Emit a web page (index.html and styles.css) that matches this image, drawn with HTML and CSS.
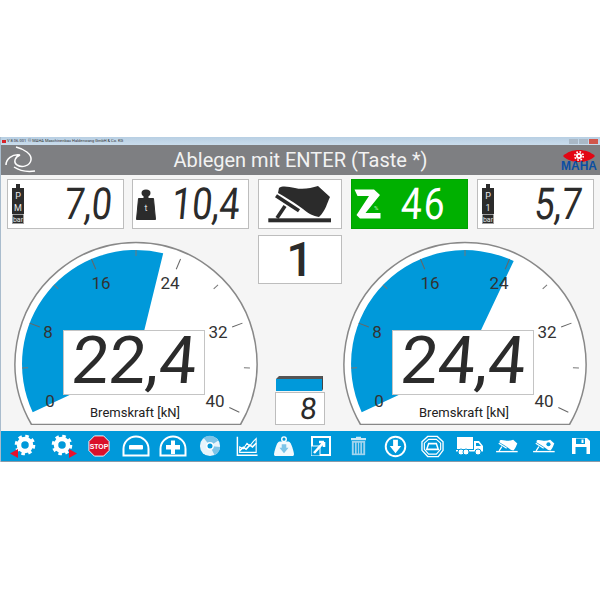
FILE: index.html
```html
<!DOCTYPE html>
<html lang="de">
<head>
<meta charset="utf-8">
<title>MAHA</title>
<link rel="stylesheet" href="styles.css">
</head>
<body>
<div class="app">
  <div class="titlebar">
    <span class="tb-flag"></span>
    <span class="tb-text">V 8.06.001 &nbsp;© MAHA Maschinenbau Haldenwang GmbH &amp; Co. KG</span>
    <span class="tb-btns"><i></i><i></i><i class="close"></i></span>
  </div>
  <header class="header">
    <svg class="swirl" viewBox="0 0 32 28" width="32" height="28">
      <path d="M11 1 C19 3 27 8 26 14 C25 20 17 22 12 19 C8 16 10 11 15 9 C7 8 1 13 1 19 M9 21 C15 25 23 26 30 25" fill="none" stroke="#fff" stroke-width="1.500"/>
    </svg>
    <h1 class="title">Ablegen mit ENTER (Taste *)</h1>
    <div class="maha">
      <svg class="eye" viewBox="0 0 32 12" width="32" height="12">
        <path d="M0 6 C8 -2 24 -2 32 6 C24 14 8 14 0 6Z" fill="#e30613"/>
        <circle cx="16" cy="6" r="3" fill="#fff"/>
        <circle cx="16" cy="6" r="4.200" fill="none" stroke="#fff" stroke-width="1.600" stroke-dasharray="1.650 1.650"/>
        <circle cx="16" cy="6" r="1.100" fill="#e30613"/>
      </svg>
      <span class="maha-text">MAHA</span>
    </div>
  </header>

  <main class="content">
    <section class="top-row">
      <div class="box lcd-box">
        <svg class="bottle" viewBox="0 0 14 40" width="14" height="40">
          <path d="M5 0H9V4H13V40H1V4H5Z" fill="#2b2b2b"/>
          <text class="bottle-t" x="7" y="15">P</text>
          <text class="bottle-t" x="7" y="27">M</text>
          <rect x="1.300" y="30.500" width="11.400" height="9" fill="#2b2b2b" stroke="#eee" stroke-width=".6"/>
          <text class="bottle-u" x="7" y="37.800">bar</text>
        </svg>
        <span class="lcd lcd-m">7,0</span>
      </div>
      <div class="box lcd-box tight">
        <svg class="weight" viewBox="0 0 20 31" width="20" height="31">
          <ellipse cx="10" cy="4" rx="4.500" ry="3.500" fill="#2b2b2b"/>
          <rect x="7.500" y="6" width="5" height="4" fill="#2b2b2b"/>
          <path d="M2.500 9.500H17.500L19.500 30.500H0.500Z" fill="#2b2b2b" stroke="#2b2b2b" stroke-linejoin="round"/>
          <text class="weight-t" x="10" y="22">t</text>
        </svg>
        <span class="lcd lcd-m">10,4</span>
      </div>
      <div class="box pedal-box">
        <svg viewBox="0 0 82 48" width="82" height="48">
          <path d="M20 8 C24 5 30 7 36 8 C44 10 52 8 59 6 L71 17 C68 23 67 30 60 37 C54 36 50 34 44 29 C36 23 26 17 19 13 Z" fill="#2b2b2b"/>
          <path d="M17 15.700 L40 30.700" stroke="#2b2b2b" stroke-width="3.600"/>
          <path d="M26 26 L18 38" stroke="#2b2b2b" stroke-width="3.600" fill="none"/>
          <rect x="9.300" y="38.300" width="62.700" height="4" fill="#2b2b2b"/>
        </svg>
      </div>
      <div class="box zone-box">
        <svg class="z" viewBox="0 0 27 30" width="27" height="30">
          <path d="M0.500 0.500 H20 L26 6 L11.500 24 H26.500 V29.500 H6 L2.500 26 L15 7 H3.500 Z" fill="#fff"/>
        </svg>
        <span class="pct">%</span>
        <span class="lcd lcd-z">46</span>
      </div>
      <div class="box lcd-box">
        <svg class="bottle" viewBox="0 0 14 40" width="14" height="40">
          <path d="M5 0H9V4H13V40H1V4H5Z" fill="#2b2b2b"/>
          <text class="bottle-t" x="7" y="15">P</text>
          <text class="bottle-t" x="7" y="27">1</text>
          <rect x="1.300" y="30.500" width="11.400" height="9" fill="#2b2b2b" stroke="#eee" stroke-width=".6"/>
          <text class="bottle-u" x="7" y="37.800">bar</text>
        </svg>
        <span class="lcd lcd-m">5,7</span>
      </div>
    </section>

    <section class="gauges">
      <div class="gauge">
        <svg viewBox="0 0 246 190" width="246" height="190">
          <path class="dial" d="M18.500 189.500 A121 121 0 1 1 227.500 189.500 Z"/>
          <path class="sector" d="M19.700 177.200 A114 114 0 0 1 150.200 18.300 L123 129 Z"/>
          <g class="ticks">
            <line class="maj" x1="9" y1="129" x2="20" y2="129" transform="rotate(21 123 129)"/>
            <line x1="9" y1="129" x2="15" y2="129" transform="rotate(-2 123 129)"/>
            <line x1="9" y1="129" x2="15" y2="129" transform="rotate(44 123 129)"/>
            <line class="maj" x1="9" y1="129" x2="20" y2="129" transform="rotate(67 123 129)"/>
            <line x1="9" y1="129" x2="15" y2="129" transform="rotate(90 123 129)"/>
            <line class="maj" x1="9" y1="129" x2="20" y2="129" transform="rotate(113 123 129)"/>
            <line x1="9" y1="129" x2="15" y2="129" transform="rotate(136 123 129)"/>
            <line class="maj" x1="9" y1="129" x2="20" y2="129" transform="rotate(159 123 129)"/>
            <line x1="9" y1="129" x2="15" y2="129" transform="rotate(182 123 129)"/>
            <line class="maj" x1="9" y1="129" x2="20" y2="129" transform="rotate(205 123 129)"/>
          </g>
          <g class="scale">
            <text x="37" y="172">0</text>
            <text x="35" y="103">8</text>
            <text x="88" y="54">16</text>
            <text x="157" y="54">24</text>
            <text x="205" y="103">32</text>
            <text x="202" y="172">40</text>
          </g>
          <text class="unit" x="122" y="182">Bremskraft [kN]</text>
        </svg>
        <div class="box readout"><span class="lcd lcd-l">22,4</span></div>
      </div>

      <div class="center">
        <div class="box count">1</div>
        <div class="side">
          <svg class="bar" viewBox="0 0 48 15" width="48" height="15">
            <path d="M3 0H47V3H0Z" fill="#555"/>
            <path d="M47 0V13L46 15V3Z" fill="#444"/>
            <rect x="0" y="3" width="46" height="12" fill="#0099da"/>
          </svg>
          <div class="box small"><span class="lcd lcd-s">8</span></div>
        </div>
      </div>

      <div class="gauge">
        <svg viewBox="0 0 246 190" width="246" height="190">
          <path class="dial" d="M18.500 189.500 A121 121 0 1 1 227.500 189.500 Z"/>
          <path class="sector" d="M19.700 177.200 A114 114 0 0 1 171.700 26 L123 129 Z"/>
          <g class="ticks">
            <line class="maj" x1="9" y1="129" x2="20" y2="129" transform="rotate(21 123 129)"/>
            <line x1="9" y1="129" x2="15" y2="129" transform="rotate(-2 123 129)"/>
            <line x1="9" y1="129" x2="15" y2="129" transform="rotate(44 123 129)"/>
            <line class="maj" x1="9" y1="129" x2="20" y2="129" transform="rotate(67 123 129)"/>
            <line x1="9" y1="129" x2="15" y2="129" transform="rotate(90 123 129)"/>
            <line class="maj" x1="9" y1="129" x2="20" y2="129" transform="rotate(113 123 129)"/>
            <line x1="9" y1="129" x2="15" y2="129" transform="rotate(136 123 129)"/>
            <line class="maj" x1="9" y1="129" x2="20" y2="129" transform="rotate(159 123 129)"/>
            <line x1="9" y1="129" x2="15" y2="129" transform="rotate(182 123 129)"/>
            <line class="maj" x1="9" y1="129" x2="20" y2="129" transform="rotate(205 123 129)"/>
          </g>
          <g class="scale">
            <text x="37" y="172">0</text>
            <text x="35" y="103">8</text>
            <text x="88" y="54">16</text>
            <text x="157" y="54">24</text>
            <text x="205" y="103">32</text>
            <text x="202" y="172">40</text>
          </g>
          <text class="unit" x="122" y="182">Bremskraft [kN]</text>
        </svg>
        <div class="box readout"><span class="lcd lcd-l">24,4</span></div>
      </div>
    </section>
  </main>

  <nav class="toolbar">
    <svg class="ico" viewBox="0 0 30 26" width="30" height="26"><g transform="translate(15 12)"><circle r="6" fill="none" stroke="#fff" stroke-width="4.500"/><circle r="8.800" fill="none" stroke="#fff" stroke-width="3" stroke-dasharray="3.500 3.410"/></g><path d="M0 20.500L8 16V25Z" fill="#e8112d"/></svg>
    <svg class="ico" viewBox="0 0 30 26" width="30" height="26"><g transform="translate(15 12)"><circle r="6" fill="none" stroke="#fff" stroke-width="4.500"/><circle r="8.800" fill="none" stroke="#fff" stroke-width="3" stroke-dasharray="3.500 3.410"/></g><path d="M30 20.500L22 16V25Z" fill="#e8112d"/></svg>
    <svg class="ico" viewBox="0 0 24 24" width="22" height="22"><path d="M7 1H17L23 7V17L17 23H7L1 17V7Z" fill="#d9112a" stroke="#fff"/><text class="stop" x="12" y="15">STOP</text></svg>
    <svg class="ico" viewBox="0 0 28 24" width="28" height="24"><path d="M1.500 21.500 V15 A12.500 12.500 0 0 1 26.500 15 V21.500 Z" fill="none" stroke="#fff" stroke-width="2"/><rect x="7" y="11" width="14" height="4.500" rx="1" fill="#fff"/></svg>
    <svg class="ico" viewBox="0 0 28 24" width="28" height="24"><path d="M1.500 21.500 V15 A12.500 12.500 0 0 1 26.500 15 V21.500 Z" fill="none" stroke="#fff" stroke-width="2"/><path d="M7 11H12V6.500H16V11H21V15.500H16V20H12V15.500H7Z" fill="#fff"/></svg>
    <svg class="ico" viewBox="0 0 24 24" width="22" height="22"><circle cx="12" cy="12" r="11" fill="#e8f4fb"/><path d="M12 12 L5 3 A11 11 0 0 1 21 6Z M12 12 L23 13 A11 11 0 0 1 17 22Z" fill="#7cc4e8"/><circle cx="12" cy="12" r="3.500" fill="#0099da" stroke="#fff" stroke-width="1.500"/></svg>
    <svg class="ico" viewBox="0 0 24 24" width="22" height="22"><path d="M1.500 2V22H23.500" fill="none" stroke="#fff" stroke-width="1.600"/><path d="M4 19V13L8 15L12 9L15 12L19 7L22 4V19Z" fill="none" stroke="#fff" stroke-width="1.200"/><path d="M4 17L8 13.500L11 15.500L15 11L18 13L22 9" fill="none" stroke="#fff" stroke-width="1.800"/></svg>
    <svg class="ico" viewBox="0 0 24 22" width="22" height="20"><circle cx="12" cy="3.500" r="2.500" fill="none" stroke="#fff" stroke-width="1.500"/><path d="M7 6H17C20 6 23 18 23 20C23 21.500 22 22 21 22H3C2 22 1 21.500 1 20C1 18 4 6 7 6Z" fill="#f2f9fd"/><path d="M9.500 9H14.500V13H17L12 19L7 13H9.500Z" fill="#7cc4e8"/></svg>
    <svg class="ico" viewBox="0 0 20 20" width="20" height="20"><path d="M1 1H19V19H1Z" fill="none" stroke="#fff" stroke-width="2"/><rect x="0" y="10" width="9" height="10" fill="#0099da" stroke="#fff"/><path d="M3 17L13 6M13 6H8M13 6V11" fill="none" stroke="#fff" stroke-width="2.600"/></svg>
    <svg class="ico" viewBox="0 0 20 24" width="17" height="20"><path d="M7 2.500V1H13V2.500H19V5H1V2.500Z" fill="#cfe9f6"/><path d="M2 6H18V23H2Z" fill="#9fd4ee"/><path d="M5 8V21M8.500 8V21M11.500 8V21M15 8V21" stroke="#0099da" stroke-width="1.400"/></svg>
    <svg class="ico" viewBox="0 0 24 24" width="23" height="23"><circle cx="12" cy="12" r="10.200" fill="none" stroke="#fff" stroke-width="2"/><path d="M9.500 5H14.500V11.500H18L12 19L6 11.500H9.500Z" fill="#fff"/></svg>
    <svg class="ico" viewBox="0 0 24 24" width="23" height="23"><g fill="none" stroke="#fff"><path d="M7 1.500L17 1.500L23 7V16L18 22.500H7L1 16V7Z" stroke-width="1.400"/><path d="M8 4.500L16 4.500L20.500 8.500V15L16 20H8L3.500 15V8.500Z" stroke-width="1.200"/><path d="M8 9H16L18 15H6Z" stroke-width="1.600"/></g></svg>
    <svg class="ico" viewBox="0 0 28 20" width="28" height="20"><path d="M1 1H17V13H1Z M18 5H23L27 10V15H18Z" fill="#fff"/><rect x="0" y="14" width="27" height="1.500" fill="#fff"/><g fill="#fff" stroke="#0099da"><circle cx="5" cy="16" r="3"/><circle cx="10" cy="16" r="3"/><circle cx="22" cy="16" r="3"/></g><path d="M20 7H22.500L25 10H20Z" fill="#0099da"/></svg>
    <svg class="ico" viewBox="9 4 64 40" width="22" height="14"><path d="M20 8 C24 5 30 7 36 8 C44 10 52 8 59 6 L71 17 C68 23 67 30 60 37 C54 36 50 34 44 29 C36 23 26 17 19 13 Z" fill="#fff"/><path d="M17 15.700 L40 30.700 M26 26 L18 38" stroke="#fff" stroke-width="3.600" fill="none"/><rect x="9.300" y="38.300" width="62.700" height="4" fill="#fff"/></svg>
    <svg class="ico" viewBox="9 4 64 40" width="22" height="14"><path d="M20 8 C24 5 30 7 36 8 C44 10 52 8 59 6 L71 17 C68 23 67 30 60 37 C54 36 50 34 44 29 C36 23 26 17 19 13 Z" fill="#fff"/><circle cx="54" cy="19" r="6" fill="#0099da"/><path d="M17 15.700 L40 30.700 M26 26 L18 38" stroke="#fff" stroke-width="3.600" fill="none"/><rect x="9.300" y="38.300" width="62.700" height="4" fill="#fff"/></svg>
    <svg class="ico" viewBox="0 0 20 20" width="20" height="20"><path d="M1 2H16L19 5V18H1Z" fill="#fff"/><rect x="5" y="2.500" width="9" height="5.500" fill="#0099da"/><rect x="10.500" y="3.500" width="2" height="3.500" fill="#fff"/><rect x="4.500" y="11" width="11" height="7" fill="#0099da"/></svg>
  </nav>
</div>
</body>
</html>
```
FILE: styles.css
```css
* { box-sizing: border-box; }
html, body { margin: 0; padding: 0; background: #fff; }
body { width: 600px; height: 600px; padding-top: 137px; font-family: Roboto, "Liberation Sans", sans-serif; }
.app { width: 600px; height: 325px; display: flex; flex-direction: column; background: #f5f5f5; border-left: 1px solid #a9bccd; }
.titlebar { height: 8px; flex: none; display: flex; align-items: center; gap: 1px; padding: 0 2px 0 1px; background: linear-gradient(#b8cfe3, #c9dcec); }
.tb-flag { width: 4px; height: 3px; background: #d8232a; }
.tb-text { font-size: 4px; line-height: 8px; color: #333; white-space: nowrap; }
.tb-btns { margin-left: auto; display: flex; gap: 1px; }
.tb-btns i { display: block; width: 9px; height: 5px; background: #a9b8c6; }
.tb-btns i.close { background: #d0574c; }
.header { height: 30px; flex: none; display: flex; align-items: center; justify-content: center; position: relative; background: #7e7f82; }
.swirl { position: absolute; left: 4px; top: 1px; }
.title { margin: 0; font-weight: 400; font-size: 20px; line-height: 30px; color: #f2f2f2; }
.maha { position: absolute; right: 4px; top: 5px; width: 34px; display: flex; flex-direction: column; align-items: center; }
.eye { display: block; }
.maha-text { font-family: "Liberation Sans", sans-serif; font-weight: 700; font-size: 12px; line-height: 11px; color: #0a4ea2; margin-top: -1px; }
.content { flex: 1; display: flex; flex-direction: column; }
.box { background: #fff; border: 1px solid #bdbdbd; }
.top-row { display: flex; gap: 9px; padding: 4px 5px 0 6px; height: 54px; flex: none; }
.top-row .box { height: 50px; width: 117px; flex: none; display: flex; align-items: center; position: relative; }
.lcd-box { padding: 0 11px 0 3px; }
.top-row .tight { margin-left: -1px; padding-right: 8px; }
.top-row .pedal-box { width: 84px; justify-content: center; }
.top-row .zone-box { background: #00b000; border-color: #00a000; padding: 0 21px 0 2px; }
.pct { position: absolute; left: 22px; top: 24px; font-size: 6px; font-weight: 700; color: #9be39b; }
.bottle-t { font-size: 9px; fill: #e8e8e8; text-anchor: middle; }
.bottle-u { font-size: 7px; fill: #e8e8e8; text-anchor: middle; }
.weight-t { font-size: 9px; fill: #ddd; text-anchor: middle; }
.lcd { font-family: Roboto, "Liberation Sans", sans-serif; color: #2b2b2b; display: inline-block; transform-origin: right center; }
.lcd-m { font-size: 44px; line-height: 48px; margin-left: auto; letter-spacing: 0; transform: skewX(-5deg) scaleX(.82); }
.lcd-z { font-size: 44px; line-height: 48px; color: #fff; margin-left: auto; letter-spacing: 2px; transform: skewX(-3deg) scaleX(.85); }
.gauges { flex: 1; display: flex; padding: 6px 0 0 12px; }
.gauge { position: relative; width: 245px; flex: none; height: 190px; }
.gauge + .center + .gauge { width: 246px; }
.gauge svg { display: block; }
.dial { fill: #fff; stroke: #888; stroke-width: 1.500; }
.sector { fill: #0099da; }
.ticks line { stroke: #777; stroke-width: 1; }
.ticks line.maj { stroke: #666; }
.scale text { font-size: 17px; fill: #333; text-anchor: middle; }
.unit { font-size: 13px; fill: #222; text-anchor: middle; }
.readout { position: absolute; left: 50px; top: 95px; width: 142px; height: 65px; border: 1.500px solid #c4c4c4; display: flex; align-items: center; justify-content: center; }
.lcd-l { font-size: 66px; line-height: 62px; letter-spacing: 0; transform: skewX(-5deg); transform-origin: center; padding-bottom: 3px; }
.center { width: 84px; flex: none; height: 190px; display: flex; flex-direction: column; justify-content: space-between; align-items: center; }
.count { width: 84px; height: 49px; font-size: 48px; font-weight: 500; line-height: 47px; text-align: center; color: #2b2b2b; }
.side { display: flex; flex-direction: column; align-items: center; gap: 1px; }
.bar { display: block; }
.small { width: 50px; height: 33px; display: flex; align-items: center; justify-content: flex-end; padding-right: 7px; }
.lcd-s { font-size: 30px; line-height: 30px; transform: skewX(-5deg); }
.toolbar { flex: none; height: 31px; background: #0099da; border-bottom: 1px solid #8a9aa8; display: grid; grid-template-columns: repeat(16, 37.100px); justify-items: center; align-items: center; padding-left: 5px; }
.ico { display: block; flex: none; }
.stop { font-family: "Liberation Sans", sans-serif; font-weight: 700; font-size: 7.500px; fill: #fff; text-anchor: middle; }
```
